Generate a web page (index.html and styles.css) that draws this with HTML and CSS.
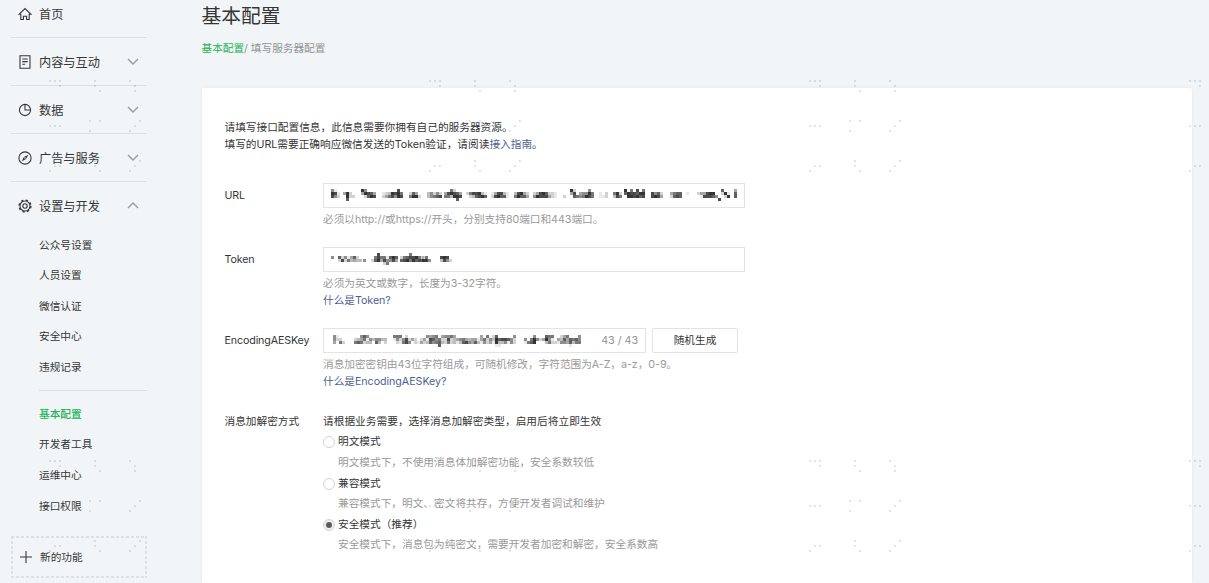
FILE: index.html
```html
<!DOCTYPE html>
<html lang="zh-CN">
	<head>
		<meta charset="utf-8">
		<title>基本配置</title>
		<link rel="stylesheet" href="styles.css">
		<script defer src="mosaic.js"></script>
	</head>

	<body>
		<nav class="sidebar">
			<a class="item">
				<svg class="icon" viewBox="0 0 14 14"><path d="M1 7.3 7 1.5l6 5.8h-1.8v5.2H8.6V9.2H5.4v3.3H2.8V7.3z"/></svg>
				<span>首页</span>
			</a>
			<a class="item">
				<svg class="icon" viewBox="0 0 14 14"><path d="M2 .8h10v12.4H2zM4.3 4h5.4M4.3 6.6h5.4M4.3 9.2h2.8"/></svg>
				<span>内容与互动</span>
				<svg class="arrow" viewBox="0 0 12 7"><path d="m1 1 5 5 5-5"/></svg>
			</a>
			<a class="item">
				<svg class="icon" viewBox="0 0 14 14"><circle cx="7" cy="7" r="5.6"/><path d="M7 1.4V7h5.6"/></svg>
				<span>数据</span>
				<svg class="arrow" viewBox="0 0 12 7"><path d="m1 1 5 5 5-5"/></svg>
			</a>
			<a class="item">
				<svg class="icon" viewBox="0 0 14 14"><circle cx="7" cy="7" r="6.1"/><path class="solid" d="M10.3 3.7 8.1 8.1 3.7 10.3 5.9 5.9z"/><circle class="hole" cx="7" cy="7" r=".8"/></svg>
				<span>广告与服务</span>
				<svg class="arrow" viewBox="0 0 12 7"><path d="m1 1 5 5 5-5"/></svg>
			</a>
			<a class="item open">
				<svg class="icon gear" viewBox="0 0 14 14"><circle class="teeth" cx="7" cy="7" r="5.9"/><circle cx="7" cy="7" r="5"/><circle cx="7" cy="7" r="2.2"/></svg>
				<span>设置与开发</span>
				<svg class="arrow" viewBox="0 0 12 7"><path d="m1 6 5-5 5 5"/></svg>
			</a>
			<ul class="submenu">
				<li>公众号设置</li>
				<li>人员设置</li>
				<li>微信认证</li>
				<li>安全中心</li>
				<li>违规记录</li>
			</ul>
			<ul class="submenu">
				<li class="active">基本配置</li>
				<li>开发者工具</li>
				<li>运维中心</li>
				<li>接口权限</li>
			</ul>
			<a class="add">
				<svg class="icon" viewBox="0 0 14 14"><path d="M7 1v12M1 7h12"/></svg>
				<span>新的功能</span>
			</a>
		</nav>

		<main>
			<h1>基本配置</h1>
			<p class="crumbs"><a>基本配置</a>/ 填写服务器配置</p>

			<form class="card">
				<p class="intro">请填写接口配置信息，此信息需要你拥有自己的服务器资源。<br>填写的URL需要正确响应微信发送的Token验证，请阅读<a>接入指南</a>。</p>

				<div class="row">
					<label>URL</label>
					<div class="field">
						<div class="input"><svg class="mosaic" data-name="url"></svg></div>
						<p class="hint">必须以http://或https://开头，分别支持80端口和443端口。</p>
					</div>
				</div>

				<div class="row">
					<label>Token</label>
					<div class="field">
						<div class="input"><svg class="mosaic" data-name="token"></svg></div>
						<p class="hint">必须为英文或数字，长度为3-32字符。<br><a>什么是Token?</a></p>
					</div>
				</div>

				<div class="row">
					<label>EncodingAESKey</label>
					<div class="field">
						<div class="group">
							<div class="input"><svg class="mosaic" data-name="key"></svg><span class="count">43 / 43</span></div>
							<button type="button">随机生成</button>
						</div>
						<p class="hint">消息加密密钥由43位字符组成，可随机修改，字符范围为A-Z，a-z，0-9。<br><a>什么是EncodingAESKey?</a></p>
					</div>
				</div>

				<div class="row modes">
					<label>消息加解密方式</label>
					<div class="field">
						<p class="lead">请根据业务需要，选择消息加解密类型，启用后将立即生效</p>
						<div class="option">
							<i class="radio"></i>
							<div><p>明文模式</p><p class="desc">明文模式下，不使用消息体加解密功能，安全系数较低</p></div>
						</div>
						<div class="option">
							<i class="radio"></i>
							<div><p>兼容模式</p><p class="desc">兼容模式下，明文、密文将共存，方便开发者调试和维护</p></div>
						</div>
						<div class="option">
							<i class="radio checked"></i>
							<div><p>安全模式（推荐）</p><p class="desc">安全模式下，消息包为纯密文，需要开发者加密和解密，安全系数高</p></div>
						</div>
					</div>
				</div>
			</form>
		</main>

		<!-- watermark dots, repeated over the whole page -->
		<svg class="watermark" width="100%" height="100%">
			<pattern id="Dots" x="49" y="80" width="380" height="380" patternUnits="userSpaceOnUse">
				<path d="M0 0h2v2h-2zM5 0h2v2h-2zM10 0h2v2h-2zM10 5h2v2h-2zM45 0h2v2h-2zM45 5h2v2h-2zM50 10h2v2h-2zM80 0h2v2h-2zM85 5h2v2h-2zM85 10h2v2h-2z"/>
				<path d="M0 45h2v2h-2zM5 45h2v2h-2zM10 45h2v2h-2zM40 40h2v2h-2zM50 40h2v2h-2zM40 50h2v2h-2zM90 40h2v2h-2zM85 45h2v2h-2zM80 50h2v2h-2z"/>
				<path d="M0 90h2v2h-2zM5 85h2v2h-2zM10 85h2v2h-2zM45 80h2v2h-2zM45 85h2v2h-2zM50 90h2v2h-2zM90 80h2v2h-2zM85 85h2v2h-2zM80 90h2v2h-2z"/>
			</pattern>
			<rect width="100%" height="100%" fill="url(#Dots)"/>
		</svg>
	</body>
</html>
```
FILE: styles.css
```css
* {
	box-sizing: border-box;
}

body {
	position: relative;
	display: flex;
	gap: 55px;
	height: 583px;
	margin: 0;
	padding-left: 11px;
	overflow: hidden;
	background-color: #f1f5f8;
	color: #353535;
	font-family: Inter, "Noto Sans CJK SC", sans-serif;
	font-size: 10.68px;
	line-height: 17.2px;
}

p, h1, ul {
	margin: 0;
	padding: 0;
	font-weight: normal;
}

a {
	color: #4c5f94;
}

.sidebar {
	flex: none;
	width: 135.5px;
	margin-top: -10px;

	& a {
		color: #353535;
	}
}

.item {
	display: flex;
	align-items: center;
	height: 48px;
	padding: 0 7.5px 0 7px;
	border-bottom: 1px solid #dee1e4;
	font-size: 12.2px;

	& span {
		padding-top: 2px;
	}

	&.open {
		border-color: transparent;
	}
}

.icon {
	flex: none;
	width: 14px;
	height: 14px;
	margin-right: 7px;
	fill: none;
	stroke: #353535;
	stroke-width: 1.1;

	& .solid {
		fill: #353535;
		stroke: none;
	}

	& .hole {
		fill: #f1f5f8;
		stroke: none;
	}

	& .teeth {
		stroke-width: 1.4;
		stroke-dasharray: 2.3 2.334;
	}
}

.arrow {
	width: 12px;
	height: 7px;
	margin-left: auto;
	fill: none;
	stroke: #989b9e;
	stroke-width: 1.4;
}

.submenu {
	margin-left: 28px;
	padding-top: 0.5px;
	list-style: none;

	& li {
		height: 30.65px;
		line-height: 30.65px;
	}

	& .active {
		color: #22b455;
		font-weight: 500;
	}

	& + & {
		margin-top: 6.5px;
		padding-top: 8.5px;
		border-top: 1px solid #dee1e4;
	}
}

.add {
	/* tighter dashes than a dashed border gives */
	--across: repeating-linear-gradient(90deg, #dee0e2 0 3px, transparent 3px 5px);
	--down: repeating-linear-gradient(#dee0e2 0 3px, transparent 3px 5px);

	display: flex;
	align-items: center;
	height: 42px;
	margin-top: 13.5px;
	padding: 1px 0 0 8px;
	background:
		var(--across) top / 100% 2px no-repeat,
		var(--across) bottom / 100% 2px no-repeat,
		var(--down) left / 2px 100% no-repeat,
		var(--down) right / 2px 100% no-repeat;

	& .icon {
		width: 14px;
		height: 14px;
	}
}

main {
	flex: none;
	width: 990px;
}

h1 {
	height: 31px;
	padding-top: 1px;
	font-size: 19.8px;
	line-height: 31px;
}

.crumbs {
	margin-top: 9px;
	color: #929496;
	letter-spacing: -0.03px;

	& a {
		color: #22b455;
	}
}

.card {
	height: 495px;
	margin-top: 31px;
	padding: 31px 23px 0;
	border-radius: 2px 2px 0 0;
	background-color: #fff;
	box-shadow: 0 0 4px rgb(0 0 0 / 5%);
}

.intro {
	margin-bottom: 29px;
}

.row {
	display: flex;
	margin-bottom: 19px;

	& > label {
		flex: none;
		width: 98.5px;
		letter-spacing: -0.12px;
		line-height: 25px;
	}
}

.field {
	width: 422px;
}

.input {
	display: flex;
	flex: 1;
	align-items: center;
	height: 25px;
	padding: 0 7px;
	border: 1px solid #e3e3e3;
}

.mosaic {
	flex: 1;
	height: 12px;
	min-width: 0;
	shape-rendering: crispEdges;
}

.count {
	color: #929292;
}

.group {
	display: flex;
	gap: 6px;

	& button {
		flex: none;
		width: 86px;
		height: 25px;
		margin-right: 7px;
		padding: 0;
		border: 1px solid #e3e3e3;
		border-radius: 2px;
		background-color: #fff;
		color: #353535;
		font: inherit;
	}

	& .input {
		min-width: 0;
	}

	& + .hint {
		width: 440px;
	}
}

.hint {
	margin-top: 3px;
	color: #9a9a9a;
	letter-spacing: -0.03px;
}

.modes {
	margin-top: 22px;

	& > label {
		letter-spacing: normal;
		line-height: inherit;
	}
}

.lead {
	margin-bottom: 3.5px;
	letter-spacing: 0.03px;
}

.option {
	display: flex;
	gap: 3px;
	height: 41.2px;

	& .desc {
		margin-top: 3px;
		color: #9a9a9a;
	}
}

.radio {
	display: grid;
	place-items: center;
	width: 12px;
	height: 12px;
	margin-top: 3px;
	border: 1px solid #d4d4d4;
	border-radius: 50%;

	&.checked {
		background-color: #eee;
	}

	&.checked::after {
		content: "";
		width: 6px;
		height: 6px;
		border-radius: 50%;
		background-color: #5c5c5c;
	}
}

.watermark {
	position: absolute;
	inset: 0;
	opacity: 0.1;
	pointer-events: none;
}
```
FILE: mosaic.js
```js
// censored values: "x:columns", each column is four cells, 0 (clear) to 9 (dark)
const values = {
	url: `0:5980.1850.0120 12:0400.0997.0220 21:0020 30:9400.5920.0870.0790.0480
		51:0120.0240.0360.0980.0850.8990.0680 78:0260.0790.0490.0020
		96:0330.0550.0260.0570.0280 113:0460.0860.6930.2890.0797.0480
		135:0200.0620.0830.0870.0980.0390.0170
		160:0120.0480.0890.0870.0370.0110 183:0360.0890.0970.0470.0240
		202:0250.0490.0880.0980.0780.0240.0220.0110 232:0020
		239:9400.2870.0060.0450.0560.0590.5980.0660 268:0110.0010.0220
		282:0630.0980.0260 293:9700.0990.6890.0880.8790.0970.6980
		320:0880.0590.0780.0240 339:0420.0670.0780.0770
		355:0100 366:0200.0410.0480.0880.0980.0970.0050.0008
		390:7200.0920.0190 403:4770`,
	token: `0:0500 7:0720.0280.0520.0160.0430.0740.0230.0030 32:0050
		40:0020.0670.8890.0640.0682.0156.0750.0980.0740 69:0270.0680.0790.6860.0890.0970.0680.0270.0050
		91:0270.0680.0050 109:0830.0980.0850.0020`,
	key: `2:5540.1200.0260.0020 23:0260.0370.5460.7620.5130.0530.0300.0570.0530.0300.0320
		62:6100.6520.6210.0560.2880.0250.0400.0220.0010.0240.0420.5130.4870.5750.6560.0677.4230
		113:5220.5860.6220.4330.0410.0530.0670.0480.0350.0440.0470.0130.4410.0650.6220.0540.2310.7991.0731.0830.0850.0710.0550.5220
		193:0510.0060.0670.5990.0500.0200.0400.7930.6560.6120.0020.0410.2350.4750.6440.0771.0630.0760.5560`,
}

document.querySelectorAll('.mosaic').forEach(svg => {
	const cells = values[svg.dataset.name].trim().split(/\s+/).flatMap(run => {
		const [ x, columns ] = run.split(':')
		return columns.split('.').flatMap((column, i) => [ ...column ].map((value, j) =>
			`<rect x="${+x + i * 3}" y="${j * 3}" width="3" height="3" fill="rgb(30 30 30 / ${value * 10}%)"/>`))
	})
	svg.innerHTML = cells.join('')
})
```
